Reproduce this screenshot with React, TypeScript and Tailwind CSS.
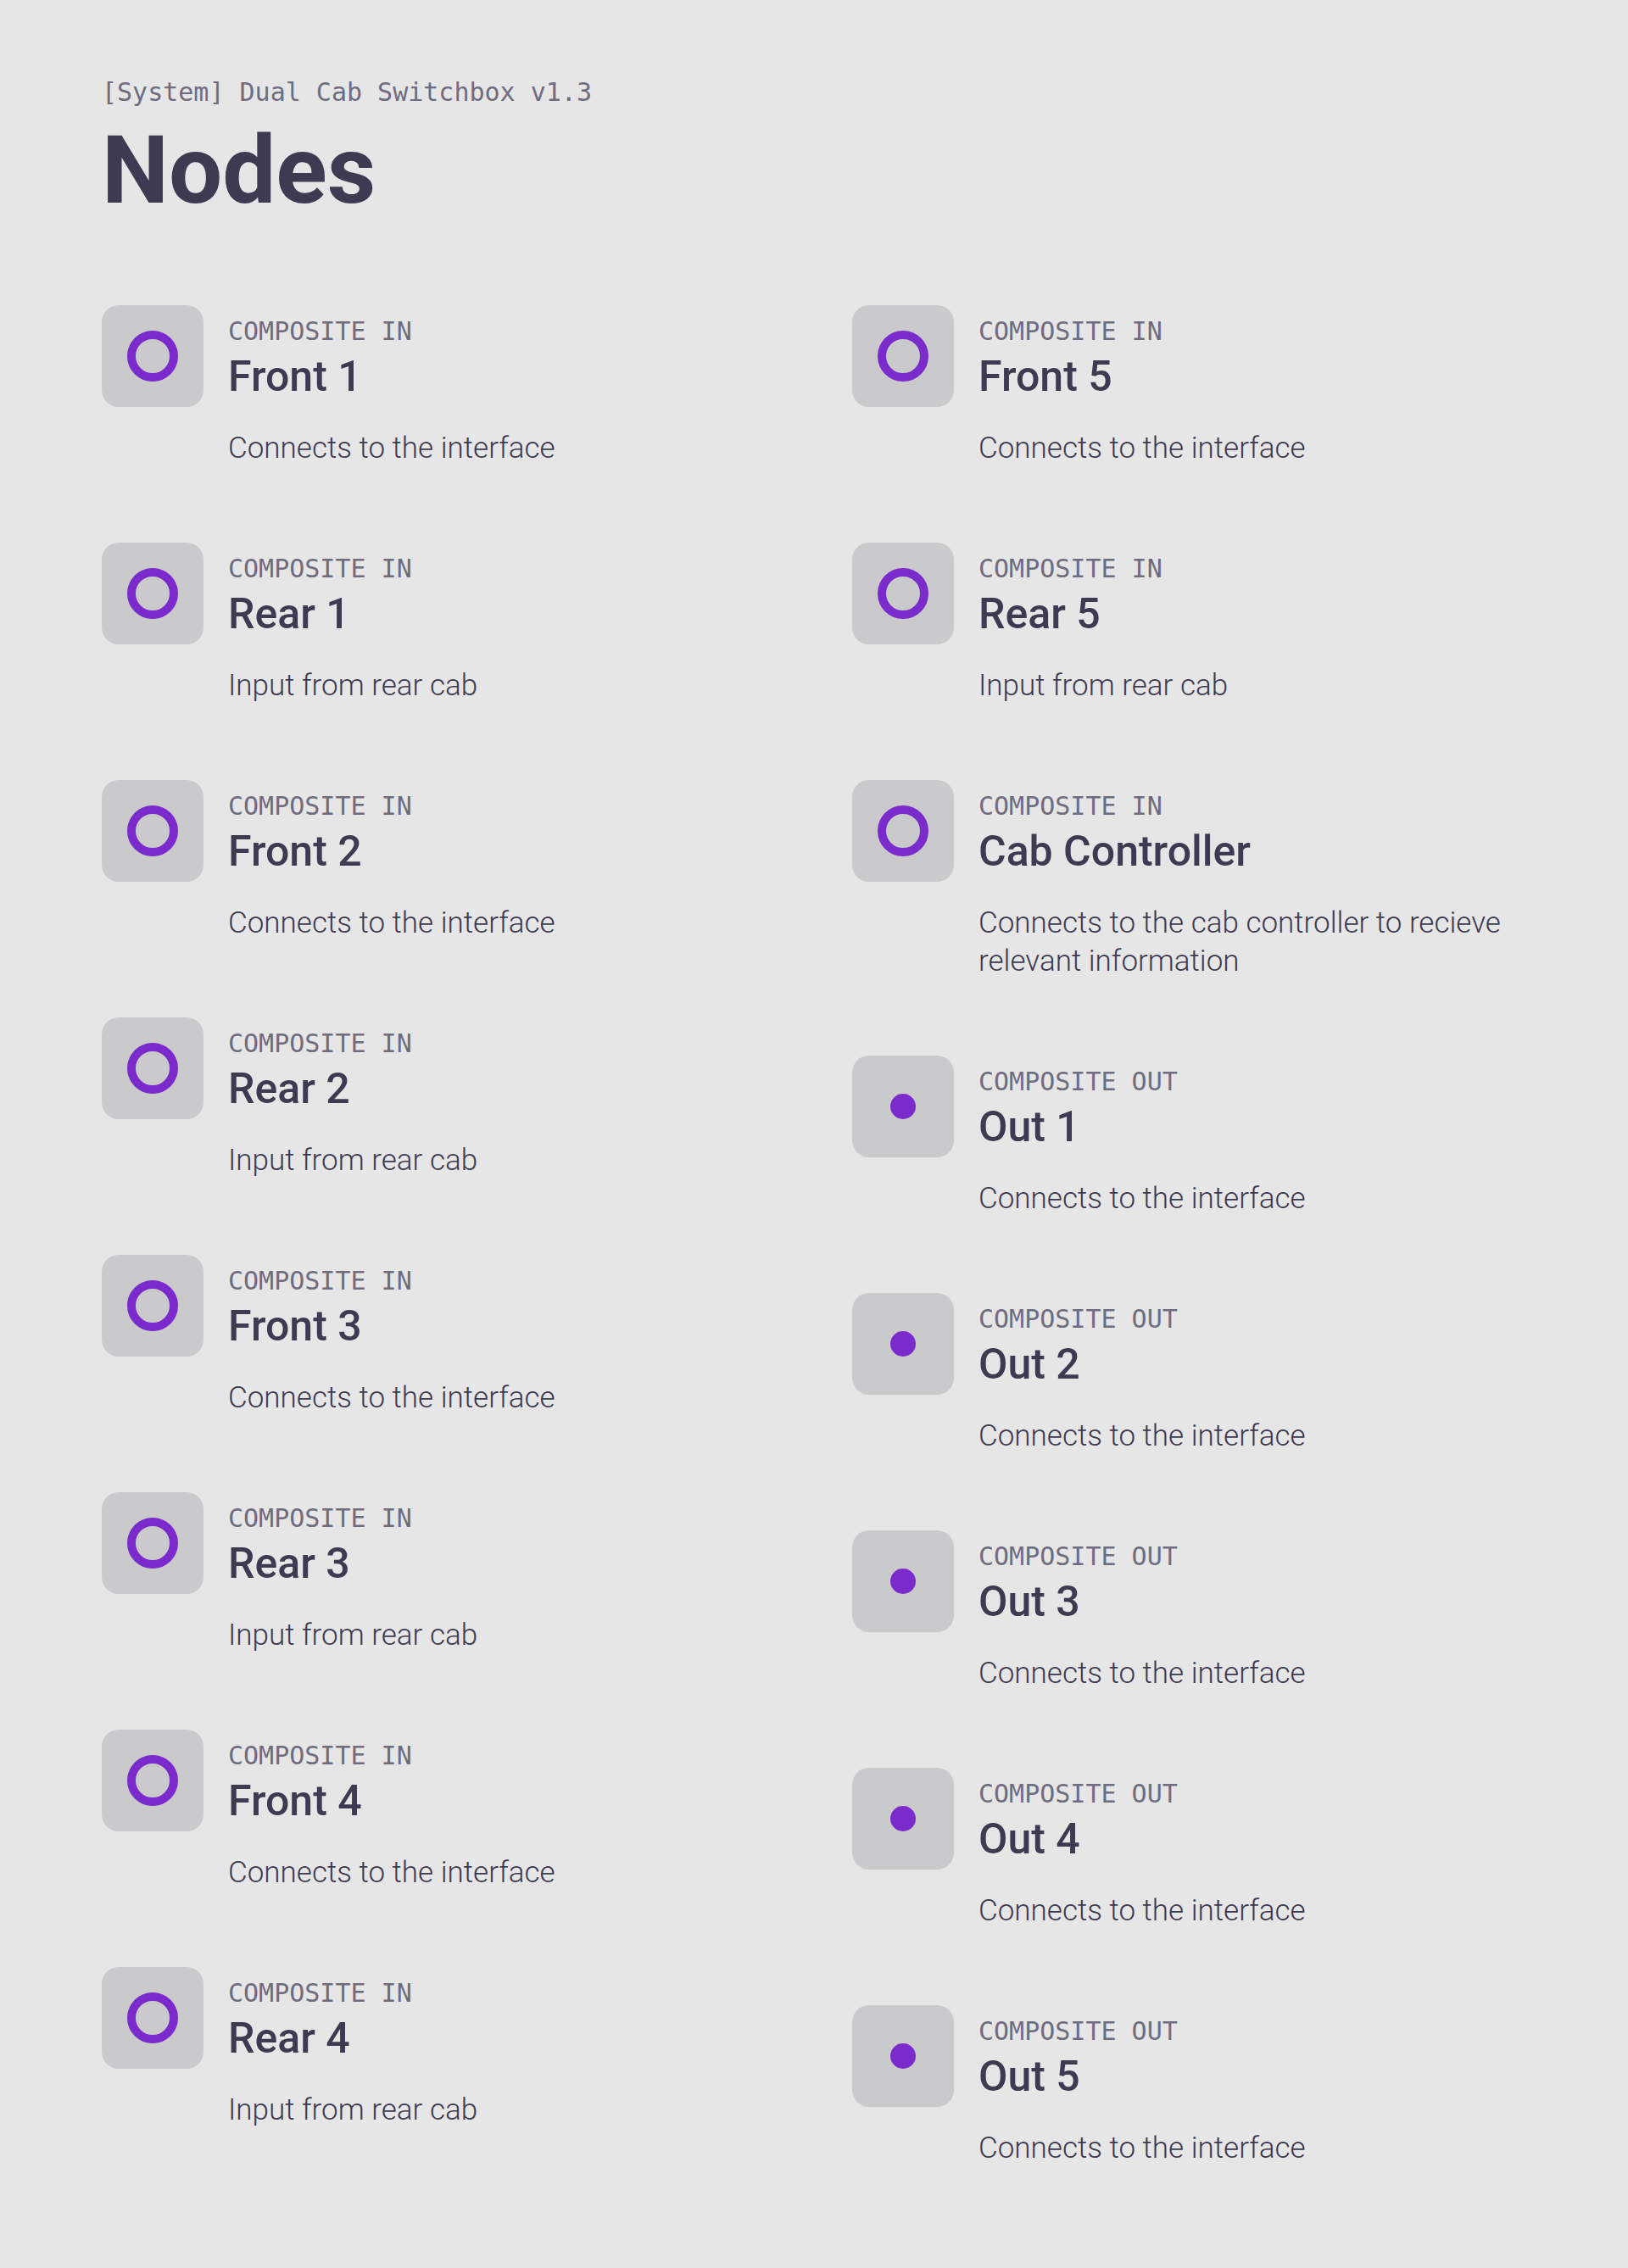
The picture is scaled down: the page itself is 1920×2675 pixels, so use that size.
import React from "react";

type Node = { kind: "in" | "out"; name: string; desc: string };

const left: Node[] = [
  { kind: "in", name: "Front 1", desc: "Connects to the interface" },
  { kind: "in", name: "Rear 1", desc: "Input from rear cab" },
  { kind: "in", name: "Front 2", desc: "Connects to the interface" },
  { kind: "in", name: "Rear 2", desc: "Input from rear cab" },
  { kind: "in", name: "Front 3", desc: "Connects to the interface" },
  { kind: "in", name: "Rear 3", desc: "Input from rear cab" },
  { kind: "in", name: "Front 4", desc: "Connects to the interface" },
  { kind: "in", name: "Rear 4", desc: "Input from rear cab" },
];

const right: Node[] = [
  { kind: "in", name: "Front 5", desc: "Connects to the interface" },
  { kind: "in", name: "Rear 5", desc: "Input from rear cab" },
  {
    kind: "in",
    name: "Cab Controller",
    desc: "Connects to the cab controller to recieve relevant information",
  },
  { kind: "out", name: "Out 1", desc: "Connects to the interface" },
  { kind: "out", name: "Out 2", desc: "Connects to the interface" },
  { kind: "out", name: "Out 3", desc: "Connects to the interface" },
  { kind: "out", name: "Out 4", desc: "Connects to the interface" },
  { kind: "out", name: "Out 5", desc: "Connects to the interface" },
];

const mono = { fontFamily: '"DejaVu Sans Mono", "Liberation Mono", monospace' };

function Item({ n }: { n: Node }) {
  return (
    <div className="flex gap-[29px]">
      <div className="w-[120px] h-[120px] shrink-0 rounded-[20px] bg-[#cacacc] flex items-center justify-center">
        {n.kind === "in" ? (
          <div className="w-[60px] h-[60px] rounded-full border-[10px] border-[#7b2acc]" />
        ) : (
          <div className="w-[30px] h-[30px] rounded-full bg-[#7b2acc]" />
        )}
      </div>
      <div className="flex flex-col pt-[13px] min-w-0">
        <div
          className="text-[30px] leading-[36px] text-[#6f6c80] uppercase"
          style={mono}
        >
          {n.kind === "in" ? "Composite In" : "Composite Out"}
        </div>
        <div className="mt-[10px] text-[50px] leading-none font-medium text-[#3d3a52]">
          {n.name}
        </div>
        <div className="mt-[37px] text-[35px] leading-[45px] font-light text-[#3d3a52]">
          {n.desc}
        </div>
      </div>
    </div>
  );
}

export default function App() {
  return (
    <div
      className="min-h-[2675px] w-full bg-[#e6e6e6] px-[120px] pt-[91px] pb-[120px]"
      style={{ fontFamily: 'Roboto, "Noto Sans", sans-serif' }}
    >
      <div className="text-[30px] leading-[36px] text-[#6f6c80]" style={mono}>
        [System] Dual Cab Switchbox v1.3
      </div>
      <h1 className="mt-[18px] text-[112px] leading-none font-bold text-[#3d3a52]">
        Nodes
      </h1>
      <div className="mt-[103px] grid grid-cols-2 gap-x-[90px]">
        <div className="flex flex-col gap-[89px]">
          {left.map((n) => (
            <Item key={n.name} n={n} />
          ))}
        </div>
        <div className="flex flex-col gap-[89px]">
          {right.map((n) => (
            <Item key={n.name} n={n} />
          ))}
        </div>
      </div>
    </div>
  );
}
